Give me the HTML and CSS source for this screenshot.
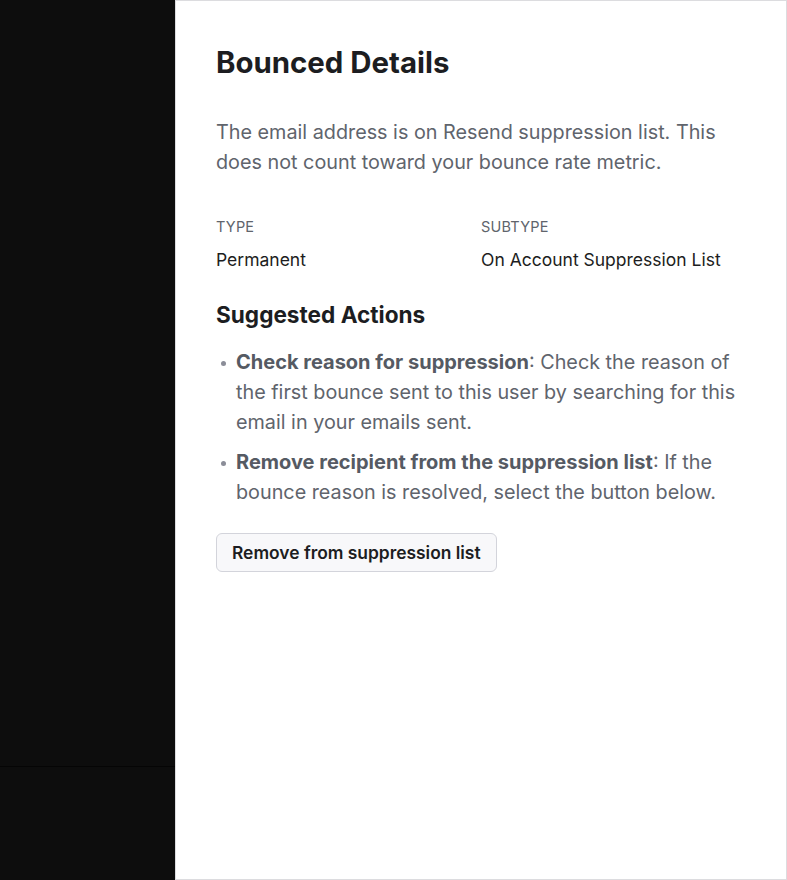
FILE: index.html
```html
<!DOCTYPE html>
<html>
<head>
<meta charset="utf-8">
<link rel="stylesheet" href="styles.css">
</head>
<body>
<div class="layout">
  <aside class="side">
    <div class="side-top"></div>
    <div class="side-bottom"></div>
  </aside>
  <main class="panel">
    <h1 class="title">Bounced Details</h1>
    <p class="desc">The email address is on Resend suppression list. This does not count toward your bounce rate metric.</p>
    <div class="meta">
      <div class="meta-item">
        <div class="meta-label">TYPE</div>
        <div class="meta-value">Permanent</div>
      </div>
      <div class="meta-item">
        <div class="meta-label">SUBTYPE</div>
        <div class="meta-value">On Account Suppression List</div>
      </div>
    </div>
    <h2 class="subtitle">Suggested Actions</h2>
    <ul class="actions">
      <li><strong>Check reason for suppression</strong>: Check the reason of the first bounce sent to this user by searching for this email in your emails sent.</li>
      <li><strong>Remove recipient from the suppression list</strong>: If the bounce reason is resolved, select the button below.</li>
    </ul>
    <button class="btn">Remove from suppression list</button>
  </main>
</div>
</body>
</html>
```
FILE: styles.css
```css
* { box-sizing: border-box; }
html, body { margin: 0; padding: 0; height: 100%; }
body {
  font-family: Inter, "Noto Sans", sans-serif;
  background: #ffffff;
  -webkit-font-smoothing: antialiased;
}
.layout {
  display: flex;
  height: 880px;
}
.side {
  width: 175px;
  flex: none;
  background: #0d0d0d;
  display: flex;
  flex-direction: column;
}
.side-top {
  height: 767px;
  border-bottom: 1px solid #050505;
}
.side-bottom { flex: 1; }
.panel {
  width: 612px;
  flex: none;
  border: 1px solid #dcdcdf;
  padding: 40px 40px;
  background: #fff;
}
.title {
  margin: 0;
  font-size: 29.4px;
  line-height: 44px;
  font-weight: 700;
  color: #1c1d21;
}
.desc {
  margin: 32px 0 0;
  font-size: 19.8px;
  line-height: 30px;
  color: #60646c;
}
.meta {
  display: grid;
  grid-template-columns: 1fr 1fr;
  margin-top: 40px;
}
.meta-label {
  font-size: 14.5px;
  line-height: 20px;
  color: #60646c;
  letter-spacing: 0.2px;
}
.meta-value {
  margin-top: 11px;
  font-size: 17.5px;
  line-height: 24px;
  color: #1c1d21;
}
.subtitle {
  margin: 27px 0 0;
  font-size: 22.6px;
  line-height: 32px;
  font-weight: 700;
  color: #1c1d21;
}
.actions {
  margin: 16px 0 0;
  padding: 0 0 0 20px;
  list-style: none;
}
.actions li {
  position: relative;
  font-size: 19.8px;
  line-height: 30px;
  color: #60646c;
  margin-bottom: 10px;
}
.actions li::before {
  content: "";
  position: absolute;
  left: -15px;
  top: 14px;
  width: 5px;
  height: 5px;
  border-radius: 50%;
  background: #8b8d98;
}
.actions strong {
  font-weight: 700;
  font-size: 20px;
  color: #555a63;
}
.btn {
  display: block;
  margin-top: 26px;
  height: 39px;
  padding: 0 15px;
  font-family: Inter, "Noto Sans", sans-serif;
  font-size: 17.4px;
  font-weight: 600;
  color: #1c1d21;
  background: #f8f8fa;
  border: 1px solid #d3d4db;
  border-radius: 6px;
}
```
